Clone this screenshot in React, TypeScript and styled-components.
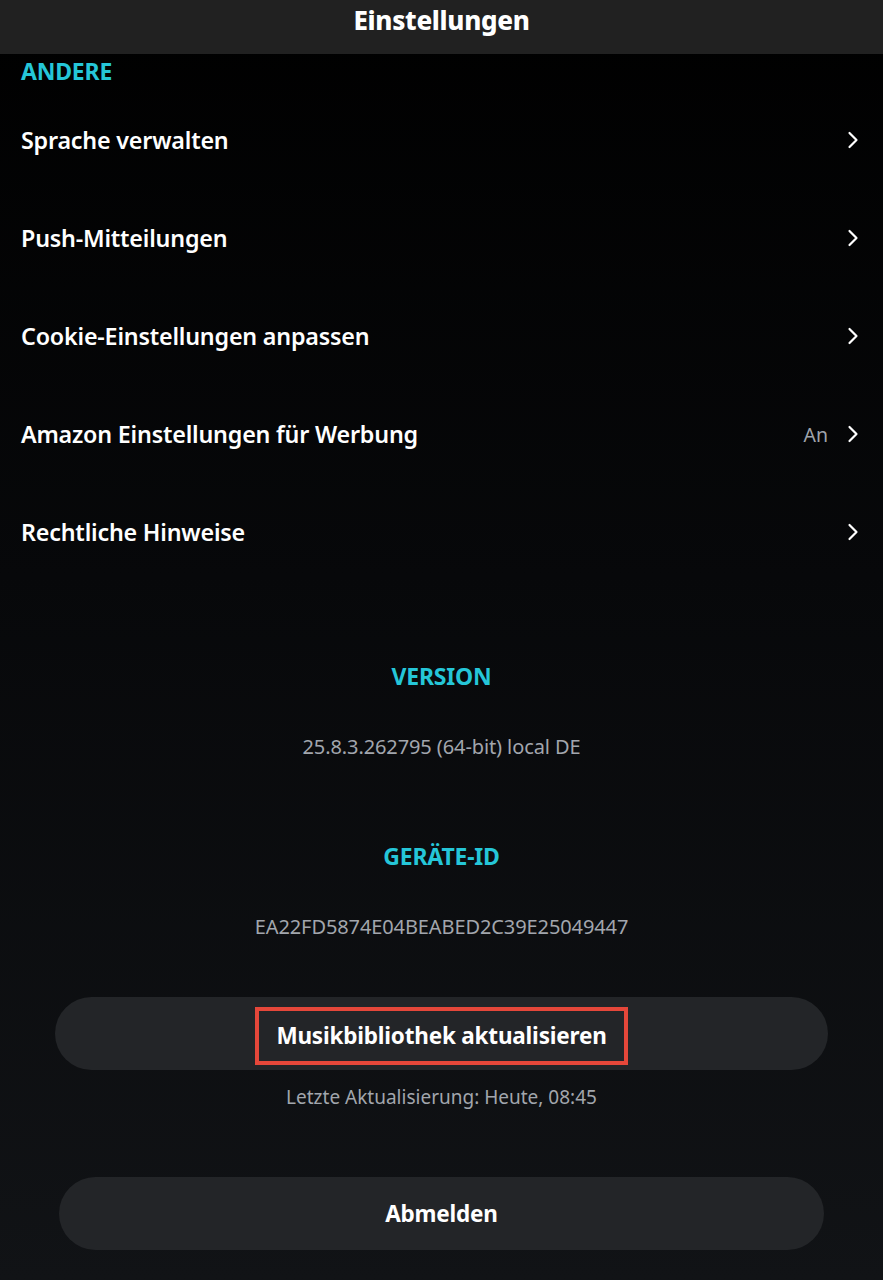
import React from "react";
import styled, { createGlobalStyle } from "styled-components";

const Global = createGlobalStyle`
  html, body { margin: 0; padding: 0; background: #000; }
  body { font-family: "Noto Sans", "Open Sans", sans-serif; -webkit-font-smoothing: antialiased; }
`;

const Page = styled.div`
  width: 883px;
  height: 1280px;
  overflow: hidden;
  display: flex;
  flex-direction: column;
  background: linear-gradient(180deg, #000000 0%, #07080a 45%, #111316 100%);
  color: #fff;
`;

const Header = styled.header`
  height: 54px;
  flex: 0 0 54px;
  box-sizing: border-box;
  padding-top: 4px;
  background: #212121;
  text-align: center;
  font-size: 26px;
  line-height: 32px;
  font-weight: 800;
  letter-spacing: -0.3px;
`;

const SectionLabel = styled.div<{ $center?: boolean; $size: number }>`
  color: #25c6d8;
  font-weight: 700;
  font-size: ${(p) => p.$size}px;
  line-height: 30px;
  letter-spacing: -0.2px;
  text-align: ${(p) => (p.$center ? "center" : "left")};
`;

const ListSection = styled.section`
  padding: 2px 0 0 21px;
`;

const List = styled.div`
  display: flex;
  flex-direction: column;
  margin-top: 5px;
`;

const Row = styled.div`
  height: 98px;
  display: flex;
  align-items: center;
  padding-right: 24px;
`;

const RowLabel = styled.span`
  flex: 1;
  font-size: 23.3px;
  font-weight: 600;
  letter-spacing: -0.2px;
`;

const RowValue = styled.span`
  color: #9ea3ab;
  font-size: 19.5px;
  margin-right: 19px;
`;

const Chevron = () => (
  <svg width="12" height="18" viewBox="0 0 12 18" fill="none">
    <path d="M2.5 2 L9.5 9 L2.5 16" stroke="#fff" strokeWidth="2.2" strokeLinecap="round" strokeLinejoin="round" />
  </svg>
);

const InfoBlock = styled.section<{ $top: number }>`
  margin-top: ${(p) => p.$top}px;
  display: flex;
  flex-direction: column;
  align-items: center;
`;

const InfoValue = styled.div`
  margin-top: 43px;
  color: #a2a6ad;
  font-size: 20px;
  line-height: 26px;
  letter-spacing: -0.1px;
`;

const PillButton = styled.button<{ $inset: number; $top: number }>`
  margin: ${(p) => p.$top}px ${(p) => p.$inset}px 0;
  height: 73px;
  flex: 0 0 73px;
  border: none;
  border-radius: 37px;
  background: #232528;
  color: #fff;
  font-family: inherit;
  font-size: 22.5px;
  line-height: 30px;
  font-weight: 700;
  display: flex;
  align-items: center;
  justify-content: center;
  letter-spacing: -0.2px;
  padding: 0;
`;

const Highlight = styled.span`
  border: 4px solid #e5473a;
  padding: 10px 17px;
  margin-top: 5px;
`;

const Caption = styled.div`
  margin-top: 14px;
  text-align: center;
  color: #a2a6ad;
  font-size: 19px;
  line-height: 26px;
`;

const rows = [
  { label: "Sprache verwalten" },
  { label: "Push-Mitteilungen" },
  { label: "Cookie-Einstellungen anpassen" },
  { label: "Amazon Einstellungen für Werbung", value: "An" },
  { label: "Rechtliche Hinweise" },
];

export default function App() {
  return (
    <>
      <Global />
      <Page>
        <Header>Einstellungen</Header>
        <ListSection>
          <SectionLabel $size={23}>ANDERE</SectionLabel>
          <List>
            {rows.map((r) => (
              <Row key={r.label}>
                <RowLabel>{r.label}</RowLabel>
                {r.value && <RowValue>{r.value}</RowValue>}
                <Chevron />
              </Row>
            ))}
          </List>
        </ListSection>
        <InfoBlock $top={80}>
          <SectionLabel $center $size={23}>VERSION</SectionLabel>
          <InfoValue>25.8.3.262795 (64-bit) local DE</InfoValue>
        </InfoBlock>
        <InfoBlock $top={81}>
          <SectionLabel $center $size={23}>GERÄTE-ID</SectionLabel>
          <InfoValue>EA22FD5874E04BEABED2C39E25049447</InfoValue>
        </InfoBlock>
        <PillButton $inset={55} $top={57}>
          <Highlight>Musikbibliothek aktualisieren</Highlight>
        </PillButton>
        <Caption>Letzte Aktualisierung: Heute, 08:45</Caption>
        <PillButton $inset={59} $top={67}>Abmelden</PillButton>
      </Page>
    </>
  );
}
